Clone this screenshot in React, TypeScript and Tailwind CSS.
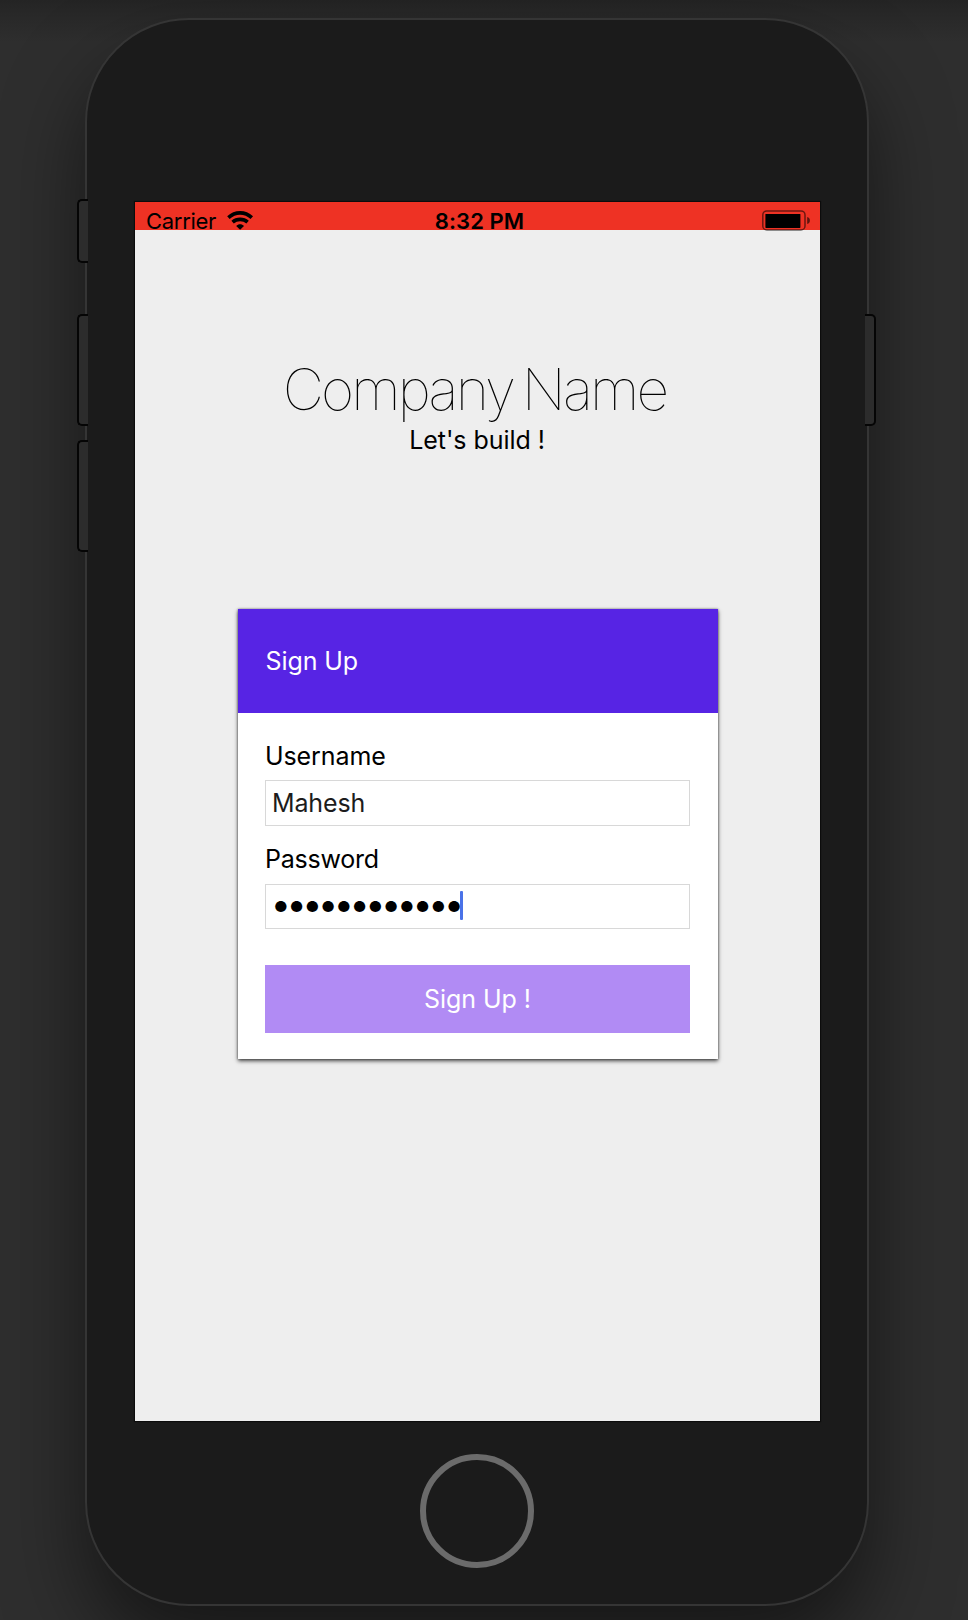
import type { ReactNode } from "react";

function WifiIcon() {
  return (
    <svg width="27" height="19" viewBox="0 0 27 19" fill="none" stroke="#000" strokeWidth="3.6">
      <path d="M1.4 6.6 C8.2 0.3 18 0.3 24.8 6.6" />
      <path d="M5.6 11.2 C9.8 7.4 16.4 7.4 20.6 11.2" />
      <path d="M9.2 14.9 C11.4 12.8 14.8 12.8 17 14.9 L13.1 18.8 Z" fill="#000" stroke="none" />
    </svg>
  );
}

function BatteryIcon() {
  return (
    <svg width="49" height="21" viewBox="0 0 49 21" fill="none">
      <rect x="0.8" y="0.9" width="42.2" height="19" rx="4" stroke="#000" strokeOpacity="0.55" strokeWidth="1.5" />
      <rect x="3.4" y="3.9" width="35" height="14" rx="0.6" fill="#000" />
      <path d="M45.2 7.1 C48.8 7.9 48.8 13.3 45.2 14.1 Z" fill="#000" fillOpacity="0.6" />
    </svg>
  );
}

function StatusBar() {
  return (
    <header className="grid h-[27.5px] shrink-0 grid-cols-3 bg-[#ee3224] px-[11px] pt-[6px] text-[22px] leading-[26px] text-black">
      <div className="flex items-start">
        <span className="tracking-[-0.3px]">Carrier</span>
        <span className="ml-[10.5px] mt-[2.5px]">
          <WifiIcon />
        </span>
      </div>
      <span className="pl-1 text-center font-semibold tracking-[0.1px]">8:32 PM</span>
      <div className="mt-[2px] -mr-[1.5px] flex items-start justify-end">
        <BatteryIcon />
      </div>
    </header>
  );
}

function SideButton({ className }: { className: string }) {
  return <div className={`absolute w-[11px] border-[2px] border-[#050505] bg-[#2c2c2c] ${className}`} />;
}

function Field({ label, className, children }: { label: ReactNode; className: string; children: ReactNode }) {
  return (
    <div className={className}>
      <div className="leading-[30px]">{label}</div>
      {children}
    </div>
  );
}

function SignUpCard() {
  return (
    <section className="mt-[154px] ml-[103px] h-[450px] w-[480px] bg-white shadow-[0_2px_4px_rgba(0,0,0,0.7),0_0_2px_rgba(0,0,0,0.4)]">
      <div className="flex h-[104px] items-center bg-[#5724e4] px-[27.5px] tracking-[-0.08px] text-white">Sign Up</div>
      <div className="pt-[28px] pr-[28px] pl-[27px]">
        <Field label={<span className="tracking-[-0.1px]">Username</span>} className="">
          <div className="mt-[9px] flex h-[46px] items-center border border-[#d8d8d8] pl-[6px] tracking-[-0.15px] text-[#1c1c1c]">
            Mahesh
          </div>
        </Field>
        <Field label={<span className="tracking-[-0.22px]">Password</span>} className="mt-[18px]">
          <div className="mt-[10px] flex h-[45px] items-center border border-[#d8d8d8] pl-[8px] text-black">
            <span className="text-[15px] leading-[20px] tracking-[2.05px]">●●●●●●●●●●●●</span>
            <span className="-mt-[3px] -ml-[3px] h-[29px] w-[3px] rounded-[1px] bg-[#4a72e8]" />
          </div>
        </Field>
        <button className="mt-[36px] flex h-[67.5px] w-full items-center justify-center bg-[#b18bf4] tracking-[-0.05px] text-white">
          Sign Up !
        </button>
      </div>
    </section>
  );
}

export default function App() {
  return (
    <div className="h-[1620px] w-[968px] overflow-hidden bg-[#2e2e2e] bg-[linear-gradient(to_bottom,#242424_0px,#282828_14px,#2e2e2e_42px)] pt-[18px] pl-[85px] font-['Inter',sans-serif] text-[25px] leading-[30px] text-black">
      <div className="relative h-[1588px] w-[784px] rounded-[104px] border-2 border-[#353535] bg-[#1b1b1b] px-[48px] pt-[182px] shadow-[0_42px_80px_rgba(0,0,0,0.5)]">
        <SideButton className="top-[179px] -left-[10px] h-[64px] rounded-l-[5px] border-r-0" />
        <SideButton className="top-[294px] -left-[10px] h-[112px] rounded-l-[5px] border-r-0" />
        <SideButton className="top-[420px] -left-[10px] h-[112px] rounded-l-[5px] border-r-0" />
        <SideButton className="top-[294px] -right-[9px] h-[112px] rounded-r-[5px] border-l-0" />
        <main className="flex h-[1219px] w-[685px] flex-col bg-[#eeeeee] shadow-[0_0_1px_1px_#0c0c0c]">
          <StatusBar />
          <h1 className="mt-[130.5px] pr-[6px] text-center text-[57px] leading-[60px] font-thin tracking-[-2.85px] whitespace-nowrap [word-spacing:-4.5px]">
            Company Name
          </h1>
          <p className="mt-[5px] pr-[1px] text-center tracking-[-0.06px]">Let's build !</p>
          <SignUpCard />
        </main>
        <div className="mt-[33px] ml-[284.5px] size-[114px] rounded-full border-[6px] border-[#6b6b6b]" />
      </div>
    </div>
  );
}
